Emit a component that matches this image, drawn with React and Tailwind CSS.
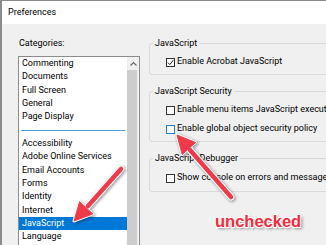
export default function App() {
  const cats1 = ["Commenting", "Documents", "Full Screen", "General", "Page Display"];
  const cats2 = ["Accessibility", "Adobe Online Services", "Email Accounts", "Forms", "Identity", "Internet", "JavaScript", "Language"];

  const Box = ({ checked, hover }) => (
    <div
      className={
        "w-[9px] h-[9px] shrink-0 bg-white border flex items-center justify-center " +
        (hover ? "border-[#1e7fd8]" : "border-[#333333]")
      }
    >
      {checked && (
        <svg width="7" height="7" viewBox="0 0 7 7">
          <path d="M0.8 3.6 L2.8 5.6 L6.3 1.2" fill="none" stroke="#222" strokeWidth="1" />
        </svg>
      )}
    </div>
  );

  const Row = ({ label, checked, hover, cls }) => (
    <div className={"flex items-center h-[12px] pl-[16px] gap-[2px] whitespace-nowrap " + cls}>
      <Box checked={checked} hover={hover} />
      <span>{label}</span>
    </div>
  );

  return (
    <div className="relative w-[326px] h-[245px] overflow-hidden bg-[#f0f0f0] border-t border-l-2 border-[#8a8a8a] font-['Roboto',sans-serif] text-[9px] text-black">
      <div className="h-[23px] bg-white flex items-center pl-[6px]">Preferences</div>

      <div className="flex pt-[13px]">
        <div className="flex flex-col pl-[16px] shrink-0">
          <div className="leading-[12px] pl-[1px]">Categories:</div>
          <div className="mt-[7px] flex w-[122px] h-[200px] border border-[#8c8c8c] bg-white">
            <div className="flex-1 flex flex-col">
              {cats1.map((c) => (
                <div key={c} className="leading-[13.33px] h-[13.33px] pl-[3px] whitespace-nowrap">
                  {c}
                </div>
              ))}
              <div className="h-[13.33px] flex items-center px-[2px]">
                <div className="h-px w-full bg-[#4f9be0]" />
              </div>
              {cats2.map((c) => (
                <div
                  key={c}
                  className={
                    "leading-[13.33px] h-[13.33px] pl-[3px] whitespace-nowrap " +
                    (c === "JavaScript" ? "bg-[#0078d7] text-white" : "")
                  }
                >
                  {c}
                </div>
              ))}
            </div>
            <div className="w-[12px] bg-[#f0f0f0] flex flex-col">
              <div className="h-[13px] flex items-center justify-center">
                <svg width="7" height="4" viewBox="0 0 7 4">
                  <path d="M0.5 3.5 L3.5 0.6 L6.5 3.5" fill="none" stroke="#606060" strokeWidth="1.1" />
                </svg>
              </div>
              <div className="flex-1 w-[10px] bg-[#cdcdcd]" />
            </div>
          </div>
        </div>

        <div className="ml-[9px] w-[200px] shrink-0 flex flex-col">
          <fieldset className="border border-[#d9d9d9] rounded-[3px] pb-[6px]">
            <legend className="ml-[3px] px-[2px] leading-[12px]">JavaScript</legend>
            <Row label="Enable Acrobat JavaScript" checked cls="mt-[7px]" />
          </fieldset>

          <fieldset className="mt-[10px] border border-[#d9d9d9] rounded-[3px] pb-[6px]">
            <legend className="ml-[3px] px-[2px] leading-[12px]">JavaScript Security</legend>
            <Row label="Enable menu items JavaScript execution privileges" cls="mt-[7px]" />
            <Row label="Enable global object security policy" hover cls="mt-[7px]" />
          </fieldset>

          <fieldset className="mt-[10px] border border-[#d9d9d9] rounded-[3px] pb-[7px]">
            <legend className="ml-[3px] px-[2px] leading-[12px]">JavaScript Debugger</legend>
            <Row label="Show console on errors and messages" cls="mt-[8px]" />
          </fieldset>
        </div>
      </div>

      <svg
        className="absolute left-[-2px] top-[-1px] pointer-events-none"
        width="326"
        height="245"
        viewBox="0 0 326 245"
      >
        <g className="drop-shadow-[1px_1px_1.5px_rgba(0,0,0,0.45)]">
          <line x1="121" y1="169" x2="88" y2="206" stroke="#fff" strokeWidth="7" strokeLinecap="round" />
          <polygon points="74,221 92.8,213.9 79.6,201.7" fill="#fff" stroke="#fff" strokeWidth="3" strokeLinejoin="round" />
          <line x1="121" y1="169" x2="88" y2="206" stroke="#f03a4a" strokeWidth="4.5" strokeLinecap="round" />
          <polygon points="74,221 92.8,213.9 79.6,201.7" fill="#f03a4a" stroke="#f03a4a" strokeWidth="1" strokeLinejoin="round" />
        </g>
        <g className="drop-shadow-[1px_1px_1.5px_rgba(0,0,0,0.45)]">
          <line x1="231" y1="197" x2="190" y2="150" stroke="#fff" strokeWidth="7" strokeLinecap="round" />
          <polygon points="177,135 195.6,142.5 182.2,154.5" fill="#fff" stroke="#fff" strokeWidth="3" strokeLinejoin="round" />
          <line x1="231" y1="197" x2="190" y2="150" stroke="#f03a4a" strokeWidth="4.5" strokeLinecap="round" />
          <polygon points="177,135 195.6,142.5 182.2,154.5" fill="#f03a4a" stroke="#f03a4a" strokeWidth="1" strokeLinejoin="round" />
        </g>
      </svg>

      <div className="absolute left-[213px] top-[212px] font-['Liberation_Sans',sans-serif] font-bold text-[16.5px] leading-[16px] text-[#f5283c] [text-shadow:-1px_-1px_0_#fff,1px_-1px_0_#fff,-1px_1px_0_#fff,1px_1px_0_#fff,0_-1px_0_#fff,0_1px_0_#fff,2px_2px_3px_rgba(0,0,0,0.5)]">
        unchecked
      </div>
    </div>
  );
}
